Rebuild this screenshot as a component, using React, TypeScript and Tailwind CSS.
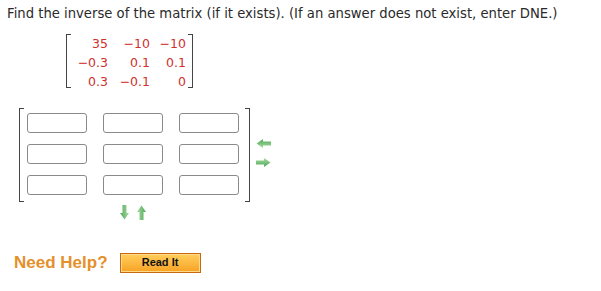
import React from "react";

const red = "text-[#d0312d]";

function Bracket({ side, h }: { side: "l" | "r"; h: string }) {
  return (
    <div
      className={`${h} w-[5px] border-y border-[#444] ${side === "l" ? "border-l" : "border-r"}`}
    />
  );
}

function Arrow({ dir }: { dir: "left" | "right" | "up" | "down" }) {
  const rot = { right: 0, left: 180, down: 90, up: 270 }[dir];
  return (
    <svg width="15" height="9" viewBox="0 0 15 9" style={{ transform: `rotate(${rot}deg)` }}>
      <defs>
        <linearGradient id={`g${dir}`} x1="0" y1="0" x2="0" y2="1">
          <stop offset="0" stopColor="#a8dca0" />
          <stop offset="1" stopColor="#4ea85a" />
        </linearGradient>
      </defs>
      <path d="M0 2.5 H8 V0 L14.5 4.5 L8 9 V6.5 H0 Z" fill={`url(#g${dir})`} />
    </svg>
  );
}

export default function App() {
  const rows = [
    ["35", "\u221210", "\u221210"],
    ["\u22120.3", "0.1", "0.1"],
    ["0.3", "\u22120.1", "0"],
  ];
  return (
    <div
      className="w-[601px] h-[291px] bg-white text-[#2a2a2a] overflow-hidden"
      style={{ fontFamily: "Verdana, 'DejaVu Sans', sans-serif" }}
    >
      <div className="pl-[7px] pt-[5px] text-[13.2px] leading-[17px]">
        Find the inverse of the matrix (if it exists). (If an answer does not exist, enter DNE.)
      </div>

      <div className="flex ml-[66px] mt-[12px] items-stretch">
        <Bracket side="l" h="h-[54px]" />
        <div className={`grid grid-cols-[42px_42px_36px] text-[12.5px] leading-[19px] ${red} -ml-[5px]`}>
          {rows.flat().map((v, i) => (
            <div key={i} className="text-right">
              {v}
            </div>
          ))}
        </div>
        <div className="w-[2px]" />
        <Bracket side="r" h="h-[54px]" />
      </div>

      <div className="flex ml-[19px] mt-[17px] items-start">
        <Bracket side="l" h="h-[94px]" />
        <div className="grid grid-cols-[60px_60px_60px] gap-x-[16px] gap-y-[11px] mt-[5px] ml-[3px]">
          {Array.from({ length: 9 }).map((_, i) => (
            <div key={i} className="h-[20px] rounded-[3px] border border-[#8a8a8a] bg-white" />
          ))}
        </div>
        <div className="w-[6px]" />
        <Bracket side="r" h="h-[94px]" />
        <div className="flex flex-col gap-[10px] ml-[6px] mt-[31px]">
          <Arrow dir="left" />
          <Arrow dir="right" />
        </div>
      </div>

      <div className="flex ml-[117px] mt-[3px] gap-[2px]">
        <div className="w-[15px] h-[15px] flex items-center justify-center">
          <Arrow dir="down" />
        </div>
        <div className="w-[15px] h-[15px] flex items-center justify-center">
          <Arrow dir="up" />
        </div>
      </div>

      <div className="flex items-center ml-[14px] mt-[30px]">
        <span
          className="text-[17px] font-bold text-[#e5902a]"
          style={{ fontFamily: "'Liberation Sans', Arial, sans-serif" }}
        >
          Need Help?
        </span>
        <button
          className="ml-[12px] w-[81px] h-[20px] border border-[#c56a12] bg-gradient-to-b from-[#ffcf5a] to-[#f7a21f] text-[11px] font-bold text-[#111] leading-none"
          style={{ fontFamily: "'Liberation Sans', Arial, sans-serif", boxShadow: "inset 0 0 0 1px #ffd98a" }}
        >
          Read It
        </button>
      </div>
    </div>
  );
}
